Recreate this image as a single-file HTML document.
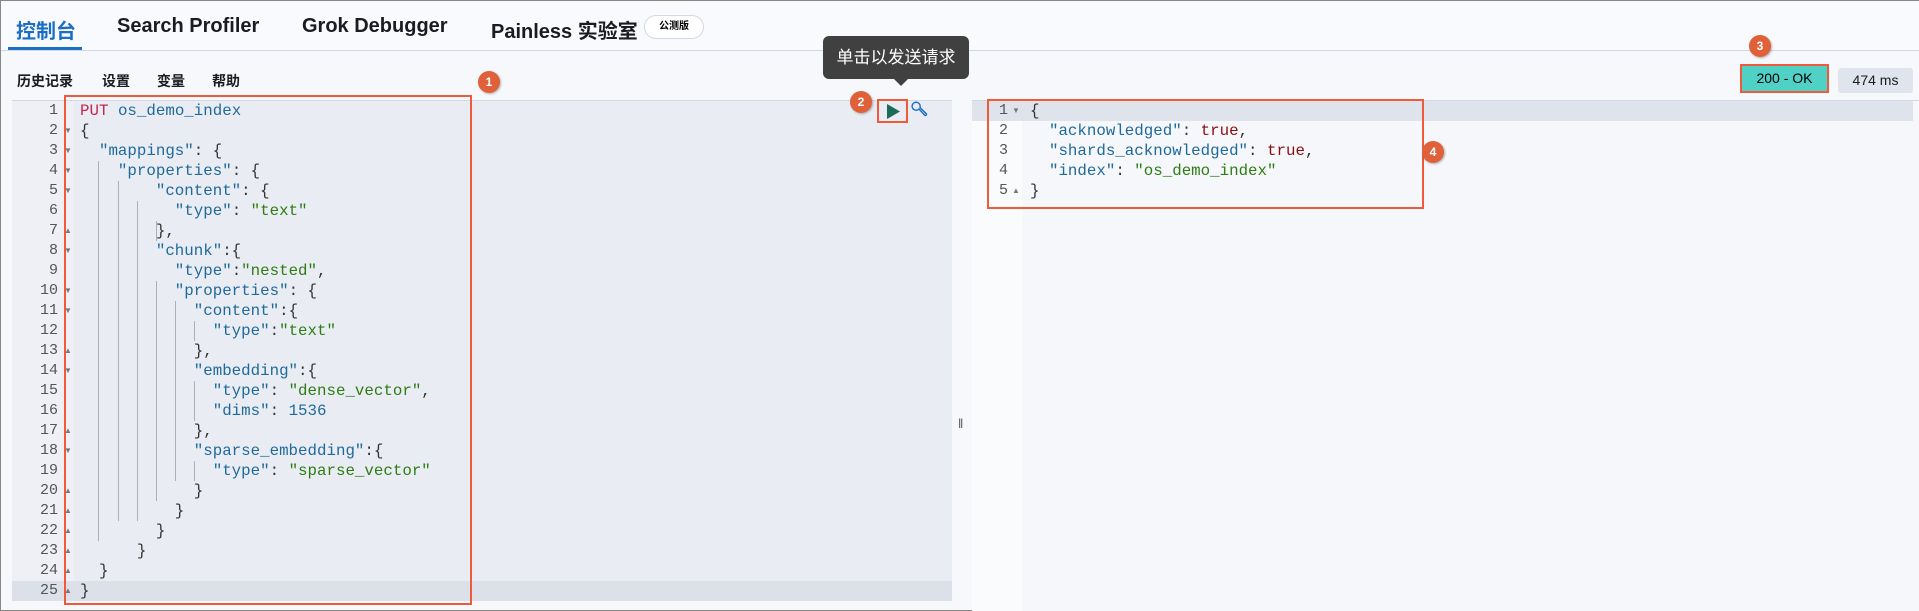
<!DOCTYPE html>
<html><head><meta charset="utf-8"><style>
*{margin:0;padding:0;box-sizing:border-box}
body{width:1919px;height:611px;overflow:hidden;background:#f7f8fc;font-family:"Liberation Sans","Noto Sans CJK SC",sans-serif;position:relative;border:1px solid #888;border-right:none}
.abs{position:absolute}
.tab{position:absolute;top:14px;font-size:20px;font-weight:bold;color:#1a1c21;white-space:nowrap}
.tb{position:absolute;top:70px;font-size:14px;font-weight:bold;color:#1a1c21}
.code{position:absolute;font-family:"Liberation Mono",monospace;font-size:15.8px;line-height:20px;white-space:pre;color:#333}
.ln{position:absolute;font-family:"Liberation Mono",monospace;font-size:15px;line-height:20px;color:#555;text-align:right}
.fa{position:absolute;font-size:8px;line-height:20px;color:#777;white-space:pre}
.k{color:#1f6a9a}.s{color:#2e7d12}.n{color:#1f6a9a}.t{color:#8b0d0d}.p{color:#c7254e}
.badge{position:absolute;width:22px;height:22px;border-radius:50%;background:#e0603a;color:#fff;font-size:12px;font-weight:bold;text-align:center;line-height:22px;box-shadow:1px 1px 2px rgba(0,0,0,.3)}
.red{position:absolute;border:2px solid #ee5a3a}
.g{position:absolute;width:1px;background:#aab0bc}
</style></head><body>
<div class="abs" style="left:0;top:0;width:1919px;height:49px;background:#f9fafd"></div>
<div class="tab" style="left:15px;color:#1a6fc4">控制台</div>
<div class="abs" style="left:7px;top:46px;width:74px;height:3px;background:#1a6fc4"></div>
<div class="tab" style="left:116px">Search Profiler</div>
<div class="tab" style="left:301px">Grok Debugger</div>
<div class="tab" style="left:490px">Painless 实验室</div>
<div class="abs" style="left:643px;top:14px;width:60px;height:24px;border:1px solid #d3d8e2;border-radius:12px;background:#fff;font-size:10px;font-weight:bold;text-align:center;line-height:22px">公测版</div>
<div class="abs" style="left:0;top:49px;width:1919px;height:1px;background:#d3d8e2"></div>

<div class="tb" style="left:16px">历史记录</div>
<div class="tb" style="left:101px">设置</div>
<div class="tb" style="left:156px">变量</div>
<div class="tb" style="left:211px">帮助</div>

<!-- left editor -->
<div class="abs" style="left:11px;top:99px;width:940px;height:501px;background:#e9ecf3;border-top:1px solid #d3d8e2"></div>
<div class="abs" style="left:11px;top:100px;width:62px;height:500px;background:#eef0f6"></div>
<div class="abs" style="left:11px;top:580px;width:940px;height:20px;background:#dbe0e9"></div>
<div class="ln" style="left:20px;top:100px;width:37px">1<br>2<br>3<br>4<br>5<br>6<br>7<br>8<br>9<br>10<br>11<br>12<br>13<br>14<br>15<br>16<br>17<br>18<br>19<br>20<br>21<br>22<br>23<br>24<br>25</div>
<div class="fa" style="left:63px;top:100px"> 
▼
▼
▼
▼
 
▲
▼
 
▼
▼
 
▲
▼
 
 
▲
▼
 
▲
▲
▲
▲
▲
▲</div>
<div class="g" style="left:97px;top:160px;height:380px"></div>
<div class="g" style="left:117px;top:180px;height:340px"></div>
<div class="g" style="left:136px;top:200px;height:320px"></div>
<div class="g" style="left:155px;top:220px;height:20px"></div>
<div class="g" style="left:155px;top:280px;height:220px"></div>
<div class="g" style="left:174px;top:300px;height:180px"></div>
<div class="g" style="left:193px;top:320px;height:20px"></div>
<div class="g" style="left:193px;top:380px;height:40px"></div>
<div class="g" style="left:193px;top:460px;height:20px"></div>
<div class="code" style="left:79px;top:100px"><span class="p">PUT</span> <span class="k">os_demo_index</span>
{
  <span class="k">"mappings"</span>: {
    <span class="k">"properties"</span>: {
        <span class="k">"content"</span>: {
          <span class="k">"type"</span>: <span class="s">"text"</span>
        },
        <span class="k">"chunk"</span>:{
          <span class="k">"type"</span>:<span class="s">"nested"</span>,
          <span class="k">"properties"</span>: {
            <span class="k">"content"</span>:{
              <span class="k">"type"</span>:<span class="s">"text"</span>
            },
            <span class="k">"embedding"</span>:{
              <span class="k">"type"</span>: <span class="s">"dense_vector"</span>,
              <span class="k">"dims"</span>: <span class="n">1536</span>
            },
            <span class="k">"sparse_embedding"</span>:{
              <span class="k">"type"</span>: <span class="s">"sparse_vector"</span>
            }
          }
        }
      }
  }
}</div>
<div class="red" style="left:63px;top:94px;width:408px;height:510px"></div>
<div class="badge" style="left:477px;top:70px">1</div>

<!-- tooltip -->
<div class="abs" style="left:822px;top:35px;width:146px;height:43px;background:#404040;border-radius:6px;color:#fff;font-size:17px;text-align:center;line-height:43px">单击以发送请求</div>
<div class="abs" style="left:893px;top:78px;width:0;height:0;border-left:7px solid transparent;border-right:7px solid transparent;border-top:7px solid #404040"></div>
<div class="badge" style="left:849px;top:90px">2</div>
<div class="red" style="left:876px;top:98px;width:31px;height:24px"></div>
<svg class="abs" style="left:883px;top:102px" width="18" height="17"><path d="M3 1 L16 8.5 L3 16 Z" fill="#1b6b5c"/></svg>
<svg class="abs" style="left:908px;top:99px" width="20" height="20" viewBox="0 0 20 20"><path d="M8.5 2.5 A4 4 0 1 0 10 9 L16 15.5 A1.3 1.3 0 0 0 17.5 14 L11 7.5 A4 4 0 0 0 8.5 2.5 Z" fill="none" stroke="#1a6fc4" stroke-width="1.4"/></svg>

<!-- divider -->
<div class="abs" style="left:957px;top:415px;font-size:13px;color:#555">‖</div>

<!-- right -->
<div class="red" style="left:1739px;top:63px;width:89px;height:29px;background:#4fd1c5;color:#000;font-size:14px;text-align:center;line-height:25px">200 - OK</div>
<div class="badge" style="left:1748px;top:34px">3</div>
<div class="abs" style="left:1837px;top:67px;width:75px;height:25px;background:#e0e4ec;border-radius:3px;font-size:14px;text-align:center;line-height:25px;color:#1a1c21">474 ms</div>
<div class="abs" style="left:971px;top:99px;width:948px;height:511px;background:#f5f7fb;border-top:1px solid #d3d8e2"></div>
<div class="abs" style="left:971px;top:100px;width:50px;height:510px;background:#fafbfd"></div>
<div class="abs" style="left:971px;top:100px;width:941px;height:20px;background:#dfe3ec"></div>
<div class="ln" style="left:985px;top:100px;width:22px">1<br>2<br>3<br>4<br>5</div>
<div class="fa" style="left:1011px;top:100px">▼



▲</div>
<div class="code" style="left:1029px;top:100px">{
  <span class="k">"acknowledged"</span>: <span class="t">true</span>,
  <span class="k">"shards_acknowledged"</span>: <span class="t">true</span>,
  <span class="k">"index"</span>: <span class="s">"os_demo_index"</span>
}</div>
<div class="red" style="left:986px;top:98px;width:437px;height:110px"></div>
<div class="badge" style="left:1421px;top:140px">4</div>
</body></html>
